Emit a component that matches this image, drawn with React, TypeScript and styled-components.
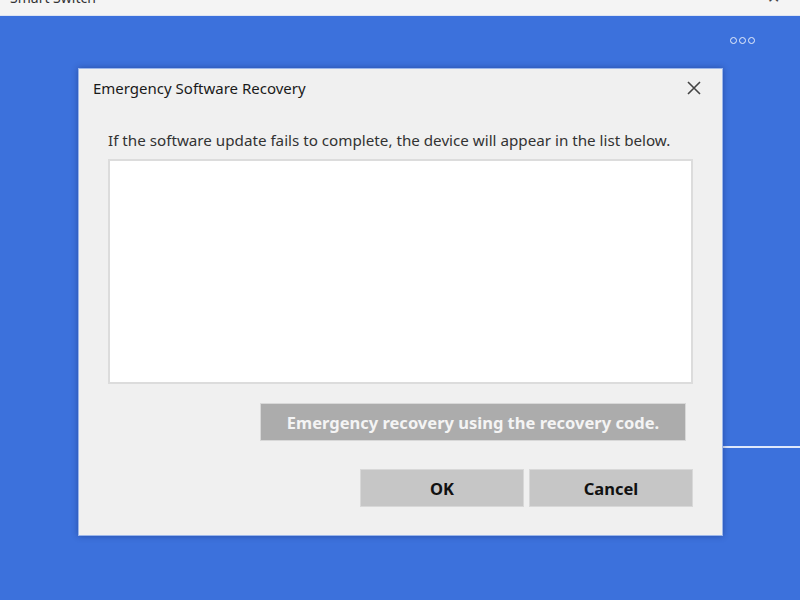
import React from "react";
import styled, { createGlobalStyle } from "styled-components";

const GlobalStyle = createGlobalStyle`
  html, body {
    margin: 0;
    padding: 0;
    width: 800px;
    height: 600px;
    overflow: hidden;
    font-family: "Noto Sans", "Open Sans", sans-serif;
  }
`;

const Screen = styled.div`
  width: 800px;
  height: 600px;
  display: flex;
  flex-direction: column;
  background: #3c71dc;
  position: relative;
`;

const TitleBar = styled.div`
  height: 15px;
  flex-shrink: 0;
  background: #f4f4f4;
  border-bottom: 1px solid #dde4f2;
  overflow: hidden;
  display: flex;
  justify-content: space-between;
  padding: 0 20px 0 10px;
`;

const AppTitle = styled.span`
  font-size: 14px;
  line-height: 14px;
  margin-top: -9px;
  color: #333;
`;

const AppClose = styled.span`
  font-size: 16px;
  line-height: 16px;
  margin-top: -11px;
  color: #444;
`;

const Backdrop = styled.div`
  flex: 1;
  display: flex;
  flex-direction: column;
  align-items: flex-end;
`;

const MoreDots = styled.div`
  display: flex;
  gap: 2px;
  margin: 21px 45px 0 0;
`;

const Dot = styled.span`
  width: 5px;
  height: 5px;
  border: 1.5px solid #e8eefb;
  border-radius: 50%;
`;

const ProgressLine = styled.div`
  margin-top: 402px;
  width: 220px;
  height: 2px;
  background: #dfe8fb;
`;

const Dialog = styled.div`
  position: absolute;
  left: 78px;
  top: 68px;
  width: 645px;
  height: 468px;
  box-sizing: border-box;
  background: #f0f0f0;
  border: 1px solid #9bb6ea;
  box-shadow: 0 0 6px rgba(20, 40, 100, 0.45);
  display: flex;
  flex-direction: column;
`;

const DialogHeader = styled.div`
  display: flex;
  justify-content: space-between;
  align-items: center;
  padding: 3px 20px 0 14px;
  height: 32px;
`;

const DialogTitle = styled.span`
  font-size: 15px;
  color: #1a1a1a;
`;

const CloseButton = styled.button`
  border: none;
  background: none;
  padding: 0;
  width: 16px;
  height: 16px;
  display: flex;
  align-items: center;
  justify-content: center;
  cursor: pointer;
`;

const Body = styled.div`
  display: flex;
  flex-direction: column;
  padding: 26px 29px 0 29px;
`;

const Description = styled.p`
  margin: 0;
  font-size: 15.2px;
  color: #333;
  line-height: 20px;
  white-space: nowrap;
`;

const DeviceList = styled.div`
  margin-top: 9px;
  height: 225px;
  box-sizing: border-box;
  background: #ffffff;
  border: 2px solid #dcdcdc;
`;

const RecoveryRow = styled.div`
  display: flex;
  justify-content: flex-end;
  padding-right: 7px;
  margin-top: 19px;
`;

const GrayButton = styled.button<{ $width: number; $tone: string; $text: string }>`
  width: ${(p) => p.$width}px;
  height: 38px;
  border: 1px solid #d8d8d8;
  background: ${(p) => p.$tone};
  color: ${(p) => p.$text};
  font-family: "Noto Sans", "Open Sans", sans-serif;
  font-weight: 700;
  font-size: 16.5px;
  padding: 0;
  cursor: pointer;
`;

const Actions = styled.div`
  display: flex;
  justify-content: flex-end;
  gap: 5px;
  margin-top: 28px;
`;

export default function App() {
  return (
    <>
      <GlobalStyle />
      <Screen>
        <TitleBar>
          <AppTitle>Smart Switch</AppTitle>
          <AppClose>✕</AppClose>
        </TitleBar>
        <Backdrop>
          <MoreDots>
            <Dot />
            <Dot />
            <Dot />
          </MoreDots>
          <ProgressLine />
        </Backdrop>
        <Dialog>
          <DialogHeader>
            <DialogTitle>Emergency Software Recovery</DialogTitle>
            <CloseButton aria-label="Close">
              <svg width="14" height="14" viewBox="0 0 14 14">
                <path d="M1 1L13 13M13 1L1 13" stroke="#444" strokeWidth="1.6" />
              </svg>
            </CloseButton>
          </DialogHeader>
          <Body>
            <Description>
              If the software update fails to complete, the device will appear in the list below.
            </Description>
            <DeviceList />
            <RecoveryRow>
              <GrayButton $width={426} $tone="#acacac" $text="#f4f4f4">
                Emergency recovery using the recovery code.
              </GrayButton>
            </RecoveryRow>
            <Actions>
              <GrayButton $width={164} $tone="#c6c6c6" $text="#111">
                OK
              </GrayButton>
              <GrayButton $width={164} $tone="#c6c6c6" $text="#111">
                Cancel
              </GrayButton>
            </Actions>
          </Body>
        </Dialog>
      </Screen>
    </>
  );
}
